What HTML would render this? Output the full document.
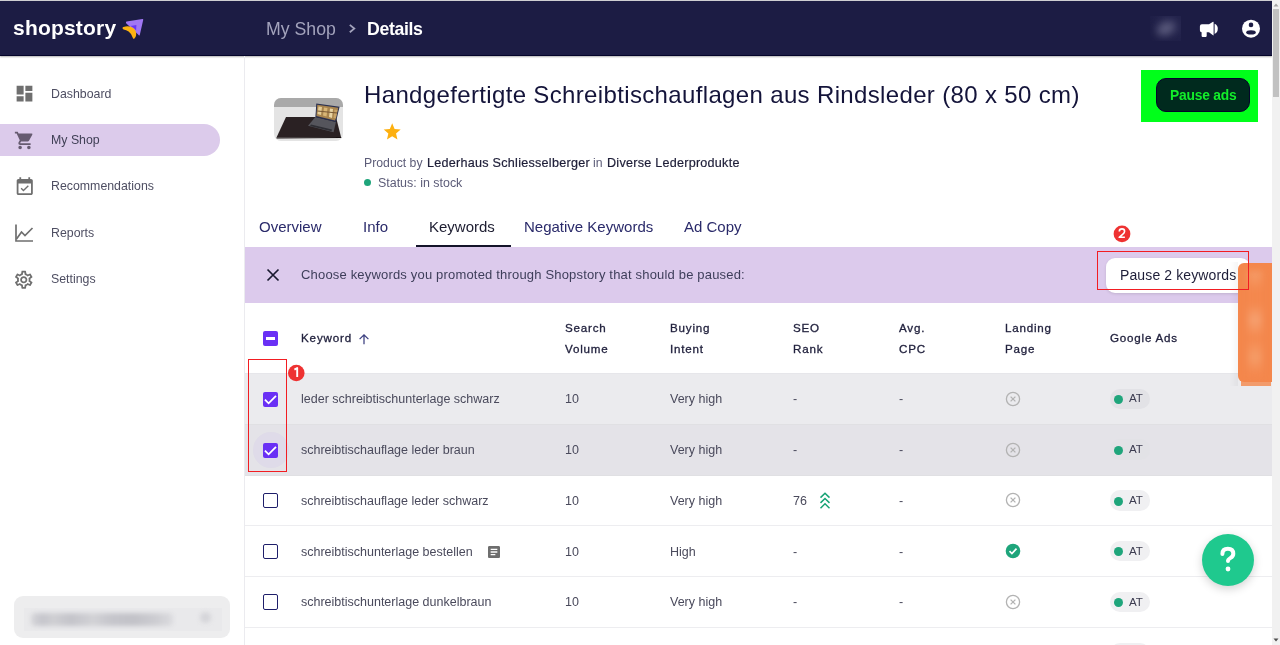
<!DOCTYPE html>
<html><head><meta charset="utf-8">
<style>
*{margin:0;padding:0;box-sizing:border-box}
html,body{width:1280px;height:645px;overflow:hidden;background:#fff;font-family:"Liberation Sans",sans-serif}
.a{position:absolute}
.t{position:absolute;white-space:pre;line-height:1;will-change:transform}
</style></head><body>
<div class="a" style="left:0;top:0;width:1280px;height:1px;background:#d0d0d4"></div>
<div class="a" style="left:0;top:1px;width:1272px;height:55px;background:#1c1c44;border-bottom:1px solid #04042a;box-shadow:0 1px 1.5px rgba(0,0,0,.3)"></div>
<div class="t" style="left:12.5px;top:16.82px;font-size:21px;color:#fff;font-weight:700;letter-spacing:0.2px;">shopstory</div>

<svg class="a" style="left:120px;top:16px" width="26" height="25" viewBox="0 0 26 25">
<path d="M6.6 5.6 L22.4 3.1 Q23.5 3 23.2 4.1 L19.9 18.6 Q19.5 20.2 18.6 19 L6.1 7.2 Q5.5 5.9 6.6 5.6Z" fill="#a077f4"/>
<path d="M3.3 10.9 Q9.6 8.8 13.9 12.6 Q16.6 15.2 16.1 19.2 Q15.7 21.9 14.2 22.8 Q13.2 23.1 12.9 22 Q11.8 17.8 8.6 15.5 Q6.3 13.9 3.6 13.4 Q2.2 12.9 2.6 11.7 Q2.8 11.1 3.3 10.9Z" fill="#fdb310"/>
<path d="M10.4 10.1 L16.4 8.9 L16.1 14.6 Q14.3 11.6 10.4 10.1Z" fill="#6a36f4"/>
</svg>
<div class="t" style="left:265.8px;top:20.92px;font-size:17.7px;color:#a3a3bc;font-weight:400;">My Shop</div>

<svg class="a" style="left:346px;top:23px" width="12" height="12" viewBox="0 0 12 12"><polyline points="3.8,1.9 8.3,5.6 3.8,9.3" fill="none" stroke="#a3a3bc" stroke-width="1.8"/></svg>
<div class="t" style="left:366.6px;top:20.72px;font-size:17.7px;color:#fff;font-weight:700;letter-spacing:-0.35px;">Details</div>

<div class="a" style="left:1150px;top:16px;width:31px;height:24.5px;overflow:hidden;background:linear-gradient(45deg,#1c1c44 25%,#22224b 70%)"><div class="a" style="left:6px;top:6px;width:20px;height:13px;border-radius:50%;background:#5c5c7e;filter:blur(4px);transform:rotate(-25deg)"></div></div>
<svg class="a" style="left:1198px;top:20px" width="21" height="18" viewBox="0 0 21 18">
<path d="M3.9 4.2 H11 L15 1.8 Q15.6 1.5 15.6 2.2 V15 Q15.6 15.7 15 15.3 L11 12.3 H8.7 V16.1 Q8.7 16.9 7.9 16.9 H4.4 Q3.6 16.9 3.6 16.1 V12.3 Q1.9 12.3 1.9 10.3 V6.2 Q1.9 4.2 3.9 4.2Z" fill="#fff"/>
<path d="M16.6 3.7 Q19.8 5 19.8 8.8 Q19.8 12.6 16.6 13.9Z" fill="#fff"/>
</svg>
<svg class="a" style="left:1241px;top:19px" width="20" height="20" viewBox="0 0 20 20">
<circle cx="10" cy="9.7" r="9" fill="#fff"/>
<circle cx="10" cy="5.9" r="2.3" fill="#1c1c44"/>
<ellipse cx="10" cy="13.4" rx="4.8" ry="2.1" fill="#1c1c44"/>
</svg>
<div class="a" style="left:244px;top:56px;width:1px;height:589px;background:#ebebef"></div>
<div class="a" style="left:0;top:124px;width:220px;height:32px;background:#dccbeb;border-radius:0 16px 16px 0"></div>
<div class="t" style="left:50.5px;top:87.75px;font-size:12.35px;color:#4e4e62;font-weight:400;">Dashboard</div>

<div class="t" style="left:50.5px;top:133.95px;font-size:12.35px;color:#3f3f55;font-weight:400;">My Shop</div>

<div class="t" style="left:50.5px;top:180.15px;font-size:12.35px;color:#4e4e62;font-weight:400;">Recommendations</div>

<div class="t" style="left:50.5px;top:226.95px;font-size:12.35px;color:#4e4e62;font-weight:400;">Reports</div>

<div class="t" style="left:50.5px;top:273.15px;font-size:12.35px;color:#4e4e62;font-weight:400;">Settings</div>

<svg class="a" style="left:14.1px;top:83.1px" width="21" height="21" viewBox="0 0 24 24"><path d="M3 13h8V3H3v10zm0 8h8v-6H3v6zm10 0h8V11h-8v10zm0-18v6h8V3h-8z" fill="#6f6f6f"/></svg>
<svg class="a" style="left:14px;top:129.5px" width="21" height="21" viewBox="0 0 24 24"><path d="M7 18c-1.1 0-1.99.9-1.99 2S5.9 22 7 22s2-.9 2-2-.9-2-2-2zM1 2v2h2l3.6 7.59-1.35 2.45c-.16.28-.25.61-.25.96 0 1.1.9 2 2 2h12v-2H7.42c-.14 0-.25-.11-.25-.25l.03-.12.9-1.63h7.45c.75 0 1.41-.41 1.75-1.03l3.58-6.49A1.003 1.003 0 0 0 20 4H5.21l-.94-2H1zm16 16c-1.1 0-1.99.9-1.99 2s.89 2 1.99 2 2-.9 2-2-.9-2-2-2z" fill="#665b70"/></svg>
<svg class="a" style="left:13.7px;top:175.6px" width="21.5" height="22" viewBox="0 0 24 24"><path d="M16.53 11.06L15.47 10l-4.88 4.88-2.12-2.12-1.06 1.06L10.59 17l5.94-5.94zM19 3h-1V1h-2v2H8V1H6v2H5c-1.11 0-1.99.9-1.99 2L3 19c0 1.1.89 2 2 2h14c1.1 0 2-.9 2-2V5c0-1.1-.9-2-2-2zm0 16H5V8h14v11z" fill="#6f6f6f"/></svg>
<svg class="a" style="left:14.3px;top:223px" width="20" height="20" viewBox="0 0 20 20"><path d="M2 1.5 V18 H19" fill="none" stroke="#6f6f6f" stroke-width="1.7"/><polyline points="2.5,16 7.5,9 11,12.5 18.5,5" fill="none" stroke="#6f6f6f" stroke-width="1.7"/></svg>
<svg class="a" style="left:13.3px;top:269px" width="21.5" height="21.5" viewBox="0 0 24 24"><path d="M19.43 12.98c.04-.32.07-.64.07-.98 0-.34-.03-.66-.07-.98l2.11-1.65c.19-.15.24-.42.12-.64l-2-3.46a.5.5 0 0 0-.61-.22l-2.49 1c-.52-.4-1.08-.73-1.69-.98l-.38-2.65A.488.488 0 0 0 14 2h-4c-.25 0-.46.18-.49.42l-.38 2.65c-.61.25-1.17.59-1.69.98l-2.49-1a.566.566 0 0 0-.18-.03c-.17 0-.34.09-.43.25l-2 3.46c-.13.22-.07.49.12.64l2.11 1.65c-.04.32-.07.65-.07.98 0 .33.03.66.07.98l-2.11 1.65c-.19.15-.24.42-.12.64l2 3.46a.5.5 0 0 0 .61.22l2.49-1c.52.4 1.08.73 1.69.98l.38 2.65c.03.24.24.42.49.42h4c.25 0 .46-.18.49-.42l.38-2.65c.61-.25 1.17-.59 1.69-.98l2.49 1c.06.02.12.03.18.03.17 0 .34-.09.43-.25l2-3.46c.12-.22.07-.49-.12-.64l-2.11-1.65zm-1.98-1.71c.04.31.05.52.05.73 0 .21-.02.43-.05.73l-.14 1.13.89.7 1.08.84-.7 1.21-1.27-.51-1.04-.42-.9.68c-.43.32-.84.56-1.25.73l-1.06.43-.16 1.13-.2 1.35h-1.4l-.19-1.35-.16-1.13-1.06-.43c-.43-.18-.83-.41-1.23-.71l-.91-.7-1.06.43-1.27.51-.7-1.21 1.08-.84.89-.7-.14-1.13c-.03-.31-.05-.54-.05-.74s.02-.43.05-.73l.14-1.13-.89-.7-1.08-.84.7-1.21 1.27.51 1.04.42.9-.68c.43-.32.84-.56 1.25-.73l1.06-.43.16-1.13.2-1.35h1.39l.19 1.35.16 1.13 1.06.43c.43.18.83.41 1.23.71l.91.7 1.06-.43 1.27-.51.7 1.21-1.07.85-.89.7.14 1.13zM12 8c-2.21 0-4 1.79-4 4s1.79 4 4 4 4-1.79 4-4-1.79-4-4-4zm0 6c-1.1 0-2-.9-2-2s.9-2 2-2 2 .9 2 2-.9 2-2 2z" fill="#6f6f6f"/></svg>
<div class="a" style="left:14px;top:596px;width:216px;height:42px;background:#ededee;border-radius:9px"></div>
<div class="a" style="left:24px;top:607.6px;width:198px;height:23.7px;background:#e9e9eb;filter:blur(0.6px)"></div>
<div class="a" style="left:31px;top:612.5px;width:142px;height:13px;background:linear-gradient(90deg,#d6d6da,#c6c6cc 8%,#cfcfd3 16%,#c4c4ca 28%,#d2d2d6 44%,#c6c6cc 56%,#c2c2c8 72%,#cdcdd2 88%,#dcdcdf);filter:blur(2.2px);border-radius:4px"></div>
<div class="a" style="left:200px;top:612px;width:11px;height:11px;background:#d5d5d9;filter:blur(2px);border-radius:6px"></div>
<div class="a" style="left:273.5px;top:98px;width:69.5px;height:43.3px;border-radius:7px;overflow:hidden;background:#e4e4e4">
<div class="a" style="left:0;top:0;width:70px;height:9.3px;background:#a9a9a9"></div>
<svg class="a" style="left:0;top:0" width="70" height="44" viewBox="0 0 70 44">
<polygon points="12,19 62,19 67,39 2.5,39.6" fill="#2a2123"/>
<polygon points="2.5,39.6 67,39 67.5,40 2.5,40.6" fill="#160f10"/>
<polygon points="41.4,19 61.9,24.1 59.6,34.3 34,27.8" fill="#55555c"/>
<polygon points="37,26.5 58,31.5 57.5,33.2 36,28" fill="#2e2e34"/>
<polygon points="42.3,5.5 65.6,8.7 61.9,24.1 41.4,19" fill="#2a3050"/>
<polygon points="43.3,6.8 64.3,9.8 61.1,22.6 42.4,17.9" fill="#a8844e"/>
<polygon points="44.5,8.5 48,9 47,17 43.5,16" fill="#e4cc96"/>
<polygon points="50,9.5 53.5,10 52.5,18.5 49,17.5" fill="#d9b676"/>
<polygon points="56,10.5 59,11 58,20 55,19" fill="#e8d4a4"/>
<polygon points="60.5,11.5 63.5,12 62,20.5 59.5,20" fill="#c9a468"/>
<polygon points="43.5,12.5 63.5,14.5 63,15.5 43.2,13.5" fill="#7a5a36"/>
</svg>
</div>
<div class="t" style="left:364px;top:83.28px;font-size:24px;color:#14143a;font-weight:400;letter-spacing:0.35px;">Handgefertigte Schreibtischauflagen aus Rindsleder (80 x 50 cm)</div>

<svg class="a" style="left:382px;top:121.6px" width="20.4" height="19.5" viewBox="0 0 24 23"><path d="M12 18.27 18.18 22l-1.64-7.03L22 10.24l-7.19-.61L12 3 9.19 9.63 2 10.24l5.46 4.73L5.82 22z" transform="translate(0,-1.5) scale(1)" fill="#fdb010"/></svg>
<div class="t" style="left:363.7px;top:156.53px;font-size:12.25px;color:#5c5c78;font-weight:400;">Product by</div>

<div class="t" style="left:426.7px;top:156.73px;font-size:12.6px;color:#1e1e38;font-weight:400;letter-spacing:0.26px;-webkit-text-stroke:0.2px #1e1e38;">Lederhaus Schliesselberger</div>

<div class="t" style="left:593.2px;top:156.53px;font-size:12.25px;color:#5c5c78;font-weight:400;">in</div>

<div class="t" style="left:606.6px;top:156.73px;font-size:12.6px;color:#1e1e38;font-weight:400;letter-spacing:0.25px;-webkit-text-stroke:0.2px #1e1e38;">Diverse Lederprodukte</div>

<div class="a" style="left:364px;top:179.2px;width:7px;height:7px;border-radius:50%;background:#1fa57b"></div>
<div class="t" style="left:378.4px;top:176.66px;font-size:12.45px;color:#5c5c78;font-weight:400;">Status: in stock</div>

<div class="a" style="left:1141px;top:70px;width:117px;height:52px;background:#00ff1a"></div>
<div class="a" style="left:1156px;top:78px;width:94px;height:34px;background:#002a1e;border:1px solid #05052a;border-radius:10px"></div>
<div class="t" style="left:1169.6px;top:88.52px;font-size:13.8px;color:#12ee2a;font-weight:700;letter-spacing:-0.2px;">Pause ads</div>

<div class="t" style="left:258.5px;top:218.70px;font-size:15px;color:#2a2a6a;font-weight:400;">Overview</div>

<div class="t" style="left:363px;top:218.70px;font-size:15px;color:#2a2a6a;font-weight:400;">Info</div>

<div class="t" style="left:428.7px;top:218.70px;font-size:15px;color:#1c1c30;font-weight:400;">Keywords</div>

<div class="t" style="left:524.2px;top:218.70px;font-size:15px;color:#2a2a6a;font-weight:400;">Negative Keywords</div>

<div class="t" style="left:683.8px;top:218.70px;font-size:15px;color:#2a2a6a;font-weight:400;">Ad Copy</div>

<div class="a" style="left:415.5px;top:245px;width:95px;height:2px;background:#14142a"></div>
<div class="a" style="left:245px;top:247px;width:1027px;height:56px;background:#dccaec"></div>
<svg class="a" style="left:266px;top:268px" width="14" height="14" viewBox="0 0 14 14"><path d="M1.5 1.5 L12.5 12.5 M12.5 1.5 L1.5 12.5" stroke="#1a1a30" stroke-width="1.7"/></svg>
<div class="t" style="left:301.2px;top:268.40px;font-size:13px;color:#3e3e5a;font-weight:400;letter-spacing:0.18px;">Choose keywords you promoted through Shopstory that should be paused:</div>

<div class="a" style="left:1106px;top:257.5px;width:144px;height:35px;background:#fff;border-radius:9px;box-shadow:0 1px 3px rgba(0,0,0,.12)"></div>
<div class="t" style="left:1119.6px;top:267.65px;font-size:14px;color:#1e1e38;font-weight:400;letter-spacing:0.12px;">Pause 2 keywords</div>

<div class="a" style="left:245px;top:372.5px;width:1027px;height:1px;background:#e6e6ea"></div>
<div class="a" style="left:263px;top:331px;width:15.3px;height:15px;border-radius:2px;background:#6a30f5"></div>
<div class="a" style="left:265.8px;top:337px;width:9.6px;height:2.8px;background:#fff"></div>
<div class="t" style="left:301.2px;top:332.38px;font-size:11.6px;color:#22223e;font-weight:400;letter-spacing:0.85px;-webkit-text-stroke:0.3px #22223e;">Keyword</div>

<svg class="a" style="left:357px;top:333px" width="14" height="12" viewBox="0 0 14 12"><path d="M7 11.2 V1.8 M2.6 6.1 L7 1.8 L11.4 6.1" fill="none" stroke="#3b3f80" stroke-width="1.25"/></svg>
<div class="t" style="left:564.7px;top:322.08px;font-size:11.6px;color:#22223e;font-weight:400;letter-spacing:0.8px;-webkit-text-stroke:0.3px #22223e;">Search</div>

<div class="t" style="left:564.7px;top:343.28px;font-size:11.6px;color:#22223e;font-weight:400;letter-spacing:0.8px;-webkit-text-stroke:0.3px #22223e;">Volume</div>

<div class="t" style="left:670.4px;top:322.08px;font-size:11.6px;color:#22223e;font-weight:400;letter-spacing:0.8px;-webkit-text-stroke:0.3px #22223e;">Buying</div>

<div class="t" style="left:670.4px;top:343.28px;font-size:11.6px;color:#22223e;font-weight:400;letter-spacing:0.8px;-webkit-text-stroke:0.3px #22223e;">Intent</div>

<div class="t" style="left:793.3px;top:322.08px;font-size:11.6px;color:#22223e;font-weight:400;letter-spacing:0.8px;-webkit-text-stroke:0.3px #22223e;">SEO</div>

<div class="t" style="left:793.3px;top:343.28px;font-size:11.6px;color:#22223e;font-weight:400;letter-spacing:0.8px;-webkit-text-stroke:0.3px #22223e;">Rank</div>

<div class="t" style="left:898.8px;top:322.08px;font-size:11.6px;color:#22223e;font-weight:400;letter-spacing:0.8px;-webkit-text-stroke:0.3px #22223e;">Avg.</div>

<div class="t" style="left:898.8px;top:343.28px;font-size:11.6px;color:#22223e;font-weight:400;letter-spacing:0.8px;-webkit-text-stroke:0.3px #22223e;">CPC</div>

<div class="t" style="left:1004.5px;top:322.08px;font-size:11.6px;color:#22223e;font-weight:400;letter-spacing:0.8px;-webkit-text-stroke:0.3px #22223e;">Landing</div>

<div class="t" style="left:1004.5px;top:343.28px;font-size:11.6px;color:#22223e;font-weight:400;letter-spacing:0.8px;-webkit-text-stroke:0.3px #22223e;">Page</div>

<div class="t" style="left:1109.7px;top:332.38px;font-size:11.6px;color:#22223e;font-weight:400;letter-spacing:0.8px;-webkit-text-stroke:0.3px #22223e;">Google Ads</div>

<div class="a" style="left:245px;top:373.50px;width:1027px;height:50.80px;background:#ebebee"></div>
<div class="a" style="left:263px;top:391.70px;width:15.3px;height:15.4px;border-radius:2px;background:#6a30f5"></div>
<svg class="a" style="left:263px;top:391.70px" width="15.3" height="15.4" viewBox="0 0 15.3 15.4"><polyline points="1.9,7.6 5.6,11.3 13,3.8" fill="none" stroke="#fff" stroke-width="1.8"/></svg>
<div class="t" style="left:300.6px;top:393.12px;font-size:12.5px;color:#4a4a5c;font-weight:400;">leder schreibtischunterlage schwarz</div>

<div class="t" style="left:565.4px;top:393.12px;font-size:12.5px;color:#4a4a5c;font-weight:400;">10</div>

<div class="t" style="left:670.1px;top:393.12px;font-size:12.5px;color:#4a4a5c;font-weight:400;">Very high</div>

<div class="t" style="left:793.0px;top:393.12px;font-size:12.5px;color:#4a4a5c;font-weight:400;">-</div>

<div class="t" style="left:898.5px;top:393.12px;font-size:12.5px;color:#4a4a5c;font-weight:400;">-</div>

<svg class="a" style="left:1005px;top:390.80px" width="16" height="16" viewBox="0 0 16 16"><circle cx="8" cy="8" r="6.6" fill="none" stroke="#b3b3b3" stroke-width="1.3"/><path d="M5.6 5.6 L10.4 10.4 M10.4 5.6 L5.6 10.4" stroke="#b3b3b3" stroke-width="1.3"/></svg>
<div class="a" style="left:1110px;top:388.50px;width:40px;height:20.5px;border-radius:10px;background:#e2e2e6"></div>
<div class="a" style="left:1114.3px;top:395.00px;width:9px;height:9px;border-radius:50%;background:#1fa57b"></div>
<div class="t" style="left:1129px;top:392.48px;font-size:11.6px;color:#3c3c50;font-weight:400;">AT</div>

<div class="a" style="left:245px;top:424.30px;width:1027px;height:50.80px;background:#e4e3e8"></div>
<div class="a" style="left:252.7px;top:432.10px;width:36px;height:36px;border-radius:50%;background:rgba(106,48,245,.045)"></div>
<div class="a" style="left:263px;top:442.50px;width:15.3px;height:15.4px;border-radius:2px;background:#6a30f5"></div>
<svg class="a" style="left:263px;top:442.50px" width="15.3" height="15.4" viewBox="0 0 15.3 15.4"><polyline points="1.9,7.6 5.6,11.3 13,3.8" fill="none" stroke="#fff" stroke-width="1.8"/></svg>
<div class="t" style="left:300.6px;top:443.92px;font-size:12.5px;color:#4a4a5c;font-weight:400;">schreibtischauflage leder braun</div>

<div class="t" style="left:565.4px;top:443.92px;font-size:12.5px;color:#4a4a5c;font-weight:400;">10</div>

<div class="t" style="left:670.1px;top:443.92px;font-size:12.5px;color:#4a4a5c;font-weight:400;">Very high</div>

<div class="t" style="left:793.0px;top:443.92px;font-size:12.5px;color:#4a4a5c;font-weight:400;">-</div>

<div class="t" style="left:898.5px;top:443.92px;font-size:12.5px;color:#4a4a5c;font-weight:400;">-</div>

<svg class="a" style="left:1005px;top:441.60px" width="16" height="16" viewBox="0 0 16 16"><circle cx="8" cy="8" r="6.6" fill="none" stroke="#b3b3b3" stroke-width="1.3"/><path d="M5.6 5.6 L10.4 10.4 M10.4 5.6 L5.6 10.4" stroke="#b3b3b3" stroke-width="1.3"/></svg>
<div class="a" style="left:1110px;top:439.30px;width:40px;height:20.5px;border-radius:10px;background:#e2e2e6"></div>
<div class="a" style="left:1114.3px;top:445.80px;width:9px;height:9px;border-radius:50%;background:#1fa57b"></div>
<div class="t" style="left:1129px;top:443.28px;font-size:11.6px;color:#3c3c50;font-weight:400;">AT</div>

<div class="a" style="left:245px;top:475.10px;width:1027px;height:50.80px;background:#fff"></div>
<div class="a" style="left:262.7px;top:492.70px;width:15.6px;height:15.4px;border-radius:2px;border:1.8px solid #1e1e6a"></div>
<div class="t" style="left:300.6px;top:494.72px;font-size:12.5px;color:#4a4a5c;font-weight:400;">schreibtischauflage leder schwarz</div>

<div class="t" style="left:565.4px;top:494.72px;font-size:12.5px;color:#4a4a5c;font-weight:400;">10</div>

<div class="t" style="left:670.1px;top:494.72px;font-size:12.5px;color:#4a4a5c;font-weight:400;">Very high</div>

<div class="t" style="left:793.0px;top:494.72px;font-size:12.5px;color:#4a4a5c;font-weight:400;">76</div>

<div class="t" style="left:898.5px;top:494.72px;font-size:12.5px;color:#4a4a5c;font-weight:400;">-</div>

<svg class="a" style="left:819px;top:492.30px" width="12" height="18" viewBox="0 0 12 18"><path d="M1.5 5.6 L6 1.2 L10.5 5.6 M1.5 10.9 L6 6.5 L10.5 10.9 M1.5 16.2 L6 11.8 L10.5 16.2" fill="none" stroke="#17a375" stroke-width="1.5"/></svg>
<svg class="a" style="left:1005px;top:492.40px" width="16" height="16" viewBox="0 0 16 16"><circle cx="8" cy="8" r="6.6" fill="none" stroke="#b3b3b3" stroke-width="1.3"/><path d="M5.6 5.6 L10.4 10.4 M10.4 5.6 L5.6 10.4" stroke="#b3b3b3" stroke-width="1.3"/></svg>
<div class="a" style="left:1110px;top:490.10px;width:40px;height:20.5px;border-radius:10px;background:#f0f0f2"></div>
<div class="a" style="left:1114.3px;top:496.60px;width:9px;height:9px;border-radius:50%;background:#1fa57b"></div>
<div class="t" style="left:1129px;top:494.08px;font-size:11.6px;color:#3c3c50;font-weight:400;">AT</div>

<div class="a" style="left:245px;top:525.90px;width:1027px;height:50.80px;background:#fff"></div>
<div class="a" style="left:262.7px;top:543.50px;width:15.6px;height:15.4px;border-radius:2px;border:1.8px solid #1e1e6a"></div>
<div class="t" style="left:300.6px;top:545.52px;font-size:12.5px;color:#4a4a5c;font-weight:400;">schreibtischunterlage bestellen</div>

<div class="t" style="left:565.4px;top:545.52px;font-size:12.5px;color:#4a4a5c;font-weight:400;">10</div>

<div class="t" style="left:670.1px;top:545.52px;font-size:12.5px;color:#4a4a5c;font-weight:400;">High</div>

<div class="t" style="left:793.0px;top:545.52px;font-size:12.5px;color:#4a4a5c;font-weight:400;">-</div>

<div class="t" style="left:898.5px;top:545.52px;font-size:12.5px;color:#4a4a5c;font-weight:400;">-</div>

<svg class="a" style="left:485.5px;top:544.10px" width="16" height="16" viewBox="0 0 24 24"><path d="M19 3H5c-1.1 0-2 .9-2 2v14c0 1.1.9 2 2 2h14c1.1 0 2-.9 2-2V5c0-1.1-.9-2-2-2zm-5 14H7v-2h7v2zm3-4H7v-2h10v2zm0-4H7V7h10v2z" fill="#6e6e6e"/></svg>
<svg class="a" style="left:1005px;top:543.20px" width="16" height="16" viewBox="0 0 16 16"><circle cx="8" cy="8" r="7.3" fill="#1ea57b"/><polyline points="4.5,8.2 6.9,10.5 11.5,5.6" fill="none" stroke="#fff" stroke-width="1.7"/></svg>
<div class="a" style="left:1110px;top:540.90px;width:40px;height:20.5px;border-radius:10px;background:#f0f0f2"></div>
<div class="a" style="left:1114.3px;top:547.40px;width:9px;height:9px;border-radius:50%;background:#1fa57b"></div>
<div class="t" style="left:1129px;top:544.88px;font-size:11.6px;color:#3c3c50;font-weight:400;">AT</div>

<div class="a" style="left:245px;top:576.70px;width:1027px;height:50.80px;background:#fff"></div>
<div class="a" style="left:262.7px;top:594.30px;width:15.6px;height:15.4px;border-radius:2px;border:1.8px solid #1e1e6a"></div>
<div class="t" style="left:300.6px;top:596.32px;font-size:12.5px;color:#4a4a5c;font-weight:400;">schreibtischunterlage dunkelbraun</div>

<div class="t" style="left:565.4px;top:596.32px;font-size:12.5px;color:#4a4a5c;font-weight:400;">10</div>

<div class="t" style="left:670.1px;top:596.32px;font-size:12.5px;color:#4a4a5c;font-weight:400;">Very high</div>

<div class="t" style="left:793.0px;top:596.32px;font-size:12.5px;color:#4a4a5c;font-weight:400;">-</div>

<div class="t" style="left:898.5px;top:596.32px;font-size:12.5px;color:#4a4a5c;font-weight:400;">-</div>

<svg class="a" style="left:1005px;top:594.00px" width="16" height="16" viewBox="0 0 16 16"><circle cx="8" cy="8" r="6.6" fill="none" stroke="#b3b3b3" stroke-width="1.3"/><path d="M5.6 5.6 L10.4 10.4 M10.4 5.6 L5.6 10.4" stroke="#b3b3b3" stroke-width="1.3"/></svg>
<div class="a" style="left:1110px;top:591.70px;width:40px;height:20.5px;border-radius:10px;background:#f0f0f2"></div>
<div class="a" style="left:1114.3px;top:598.20px;width:9px;height:9px;border-radius:50%;background:#1fa57b"></div>
<div class="t" style="left:1129px;top:595.68px;font-size:11.6px;color:#3c3c50;font-weight:400;">AT</div>

<div class="a" style="left:245px;top:627.50px;width:1027px;height:50.80px;background:#fff"></div>
<div class="a" style="left:262.7px;top:645.10px;width:15.6px;height:15.4px;border-radius:2px;border:1.8px solid #1e1e6a"></div>
<div class="a" style="left:245px;top:423.80px;width:1027px;height:1px;background:#e0e0e3"></div>
<div class="a" style="left:245px;top:474.60px;width:1027px;height:1px;background:#e0e0e3"></div>
<div class="a" style="left:245px;top:525.40px;width:1027px;height:1px;background:#ededf0"></div>
<div class="a" style="left:245px;top:576.20px;width:1027px;height:1px;background:#ededf0"></div>
<div class="a" style="left:245px;top:627.00px;width:1027px;height:1px;background:#ededf0"></div>
<div class="a" style="left:245px;top:677.80px;width:1027px;height:1px;background:#ededf0"></div>
<div class="a" style="left:1110px;top:642.50px;width:40px;height:20.5px;border-radius:10px;background:#f0f0f2"></div>
<div class="a" style="left:248px;top:358.5px;width:38.5px;height:113px;border:1.6px solid #f21d22"></div>
<svg class="a" style="left:287px;top:364px" width="18" height="18" viewBox="0 0 18 18"><circle cx="9.3" cy="9" r="8.3" fill="#ee3232"/><path d="M7.4 5.6 L10.2 4 V13" fill="none" stroke="#fff" stroke-width="1.9" stroke-linejoin="round"/></svg>
<div class="a" style="left:1202px;top:533.6px;width:52px;height:52px;border-radius:50%;background:#1fc98e;box-shadow:0 3px 10px rgba(0,0,0,.18)"></div>
<svg class="a" style="left:1216px;top:545px" width="24" height="28" viewBox="0 0 24 28">
<path d="M6.4 9.0 Q6.4 3.7 11.85 3.7 Q17.3 3.7 17.3 8.7 Q17.3 11.3 14.6 12.9 Q12 14.5 12 16.0" fill="none" stroke="#fff" stroke-width="4" stroke-linecap="round"/>
<circle cx="12" cy="24" r="2.4" fill="#fff"/>
</svg>
<div class="a" style="left:1230px;top:262px;width:8px;height:124px;background:linear-gradient(90deg,rgba(0,0,0,0),rgba(0,0,0,.04))"></div>
<div class="a" style="left:1241.3px;top:377px;width:30px;height:8.5px;background:#f29b6b"></div>
<div class="a" style="left:1237.7px;top:262.6px;width:34px;height:119px;background:#f4874c;border-radius:6px 0 0 6px;overflow:hidden"><div class="a" style="left:10px;top:8px;width:14px;height:108px;background:linear-gradient(180deg,#f59d6a,#f4884e 18%,#f4884e 30%,#f5a070 45%,#f4884e 62%,#f59c68 80%,#f4884e 95%);filter:blur(3px)"></div></div>
<div class="a" style="left:1097px;top:251px;width:151.8px;height:39px;border:1.6px solid #f21d22"></div>
<svg class="a" style="left:1112.5px;top:225px" width="18" height="18" viewBox="0 0 18 18"><circle cx="9" cy="8.9" r="8.4" fill="#ee3232"/><path d="M6.3 6.4 Q6.3 3.9 9 3.9 Q11.6 3.9 11.6 6.3 Q11.6 7.8 9.6 9.4 L6.2 12.3 H11.9" fill="none" stroke="#fff" stroke-width="1.6" stroke-linejoin="round"/></svg>
<div class="a" style="left:1272px;top:0;width:8px;height:645px;background:#f1f1f1"></div>
<div class="a" style="left:1273px;top:9px;width:6px;height:88px;background:#c1c1c1"></div>
<svg class="a" style="left:1272px;top:2px" width="8" height="6" viewBox="0 0 8 6"><polygon points="4,1.5 6.5,4.5 1.5,4.5" fill="#a3a3a3"/></svg>
<svg class="a" style="left:1272px;top:637px" width="8" height="6" viewBox="0 0 8 6"><polygon points="4,4.5 6.5,1.5 1.5,1.5" fill="#505050"/></svg>
</body></html>
